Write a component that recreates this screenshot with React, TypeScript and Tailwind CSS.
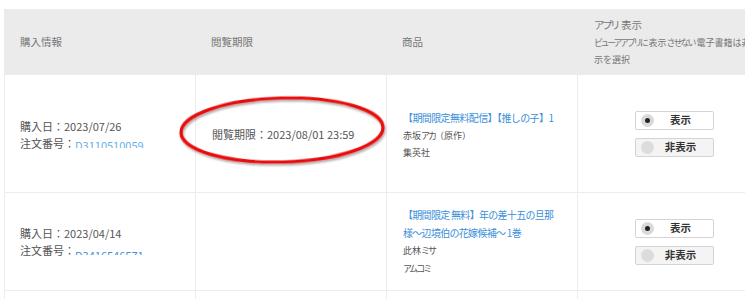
import React from "react";

const font = { fontFamily: '"Noto Sans CJK JP", "Noto Sans", sans-serif' };

function Radio({ on }: { on: boolean }) {
  return (
    <span className={`flex h-[13px] w-[13px] items-center justify-center rounded-full ${on ? "bg-[#d9d9d9]" : "bg-[#dcdcdc]"}`}>
      {on && <span className="h-[5px] w-[5px] rounded-full bg-[#222]" />}
    </span>
  );
}

function Btn({ label, on }: { label: string; on: boolean }) {
  return (
    <div className={`flex h-[19px] w-[79px] items-center rounded-[2px] border border-[#d4d4d4] pl-[5px] ${on ? "bg-white" : "bg-[#f4f4f4]"}`}>
      <Radio on={on} />
      <span className="flex-1 pr-[6px] text-center text-[10.5px] font-bold leading-none text-[#333]">{label}</span>
    </div>
  );
}

function Buttons() {
  return (
    <div className="flex w-full flex-col items-center gap-[8px] pl-[2px]">
      <Btn label="表示" on />
      <Btn label="非表示" on={false} />
    </div>
  );
}

function OrderNo({ top }: { top: boolean }) {
  return (
    <span className={`inline-block overflow-hidden align-middle ${top ? "h-[6px]" : "h-[7px]"}`}>
      <span className={`block text-[11px] leading-[12px] ${top ? "text-[#3b8fd8]" : "-mt-[2px] text-[#6aaee6]"}`}>{top ? "D3416546571" : "D3110510059"}</span>
    </span>
  );
}

const cols = "grid grid-cols-[191px_191px_191px_191px]";

export default function App() {
  return (
    <div className="relative h-[299px] w-[745px] overflow-hidden bg-white" style={font}>
      <div className="pl-[4px] pt-[9px]">
        <div className="w-[780px] text-[#555]">
          {/* header */}
          <div className={`${cols} h-[66px] bg-[#ebebeb] text-[10.5px] text-[#777]`}>
            <div className="flex items-center pl-[16px]">購入情報</div>
            <div className="flex items-center pl-[16px]">閲覧期限</div>
            <div className="flex items-center pl-[16px]">商品</div>
            <div className="flex flex-col justify-center whitespace-nowrap pl-[17px]">
              <div className="text-[10.5px] leading-[18px]">
                <span className="tracking-[-2.5px]">アプリ</span>
                <span className="pl-[3px]">表示</span>
              </div>
              <div className="text-[9px] leading-[17px]">
                <span className="tracking-[-2.4px]">ビューアアプリに</span>
                <span className="pl-[2px]">表示</span>
                <span className="tracking-[-2px]">させない</span>
                <span className="pl-[2px]">電子書籍は非表</span>
              </div>
              <div className="text-[9px] leading-[17px]">示を選択</div>
            </div>
          </div>
          {/* row 1 */}
          <div className={`${cols} h-[118px] border-b border-l border-[#ececec] text-[11px]`}>
            <div className="flex flex-col justify-center border-r border-[#ececec] pl-[15px] pt-[2px] leading-[17px]">
              <div>購入日：2023/07/26</div>
              <div>注文番号：<OrderNo top={false} /></div>
            </div>
            <div className="flex items-center border-r border-[#ececec] pl-[16px] pt-[1px]">閲覧期限：2023/08/01 23:59</div>
            <div className="flex flex-col justify-center whitespace-nowrap border-r border-[#ececec] pl-[16px] pt-[2px]">
              <div className="text-[10px] leading-[18px] tracking-[-0.6px] text-[#3b8fd8]">【期間限定無料配信】【推しの子】1</div>
              <div className="text-[9px] leading-[17px] text-[#555]">
                赤坂<span className="tracking-[-2px]">アカ</span>（原作）
              </div>
              <div className="text-[9px] leading-[17px] text-[#555]">集英社</div>
            </div>
            <div className="flex items-center pt-[1px]">
              <Buttons />
            </div>
          </div>
          {/* row 2 */}
          <div className={`${cols} h-[98px] border-b border-l border-[#ececec] text-[11px]`}>
            <div className="flex flex-col justify-center border-r border-[#ececec] pl-[15px] leading-[17px]">
              <div>購入日：2023/04/14</div>
              <div>注文番号：<OrderNo top /></div>
            </div>
            <div className="border-r border-[#ececec]" />
            <div className="flex flex-col justify-center whitespace-nowrap border-r border-[#ececec] pl-[16px]">
              <div className="text-[10px] leading-[18px] tracking-[-0.7px] text-[#3b8fd8]">【期間限定 無料】年の差十五の旦那</div>
              <div className="text-[10px] leading-[18px] tracking-[-0.7px] text-[#3b8fd8]">様～辺境伯の花嫁候補～ 1巻</div>
              <div className="text-[9px] leading-[18px] text-[#555]">
                此林<span className="tracking-[-2px]">ミサ</span>
              </div>
              <div className="text-[9px] leading-[18px] tracking-[-2px] text-[#555]">アムコミ</div>
            </div>
            <div className="flex items-center">
              <Buttons />
            </div>
          </div>
          <div className={`${cols} h-[20px] border-l border-[#ececec]`}>
            <div className="border-r border-[#ececec]" />
            <div className="border-r border-[#ececec]" />
            <div className="border-r border-[#ececec]" />
            <div />
          </div>
        </div>
      </div>
      <svg className="pointer-events-none absolute left-0 top-0" width="745" height="299">
        <defs>
          <filter id="sh" x="-10%" y="-20%" width="120%" height="150%">
            <feDropShadow dx="1" dy="2" stdDeviation="1.2" floodColor="#000" floodOpacity="0.35" />
          </filter>
        </defs>
        <ellipse cx="282" cy="130" rx="101" ry="32" fill="none" stroke="#e80d0d" strokeWidth="3.2" filter="url(#sh)" transform="rotate(-1.5 282 130)" />
      </svg>
    </div>
  );
}
